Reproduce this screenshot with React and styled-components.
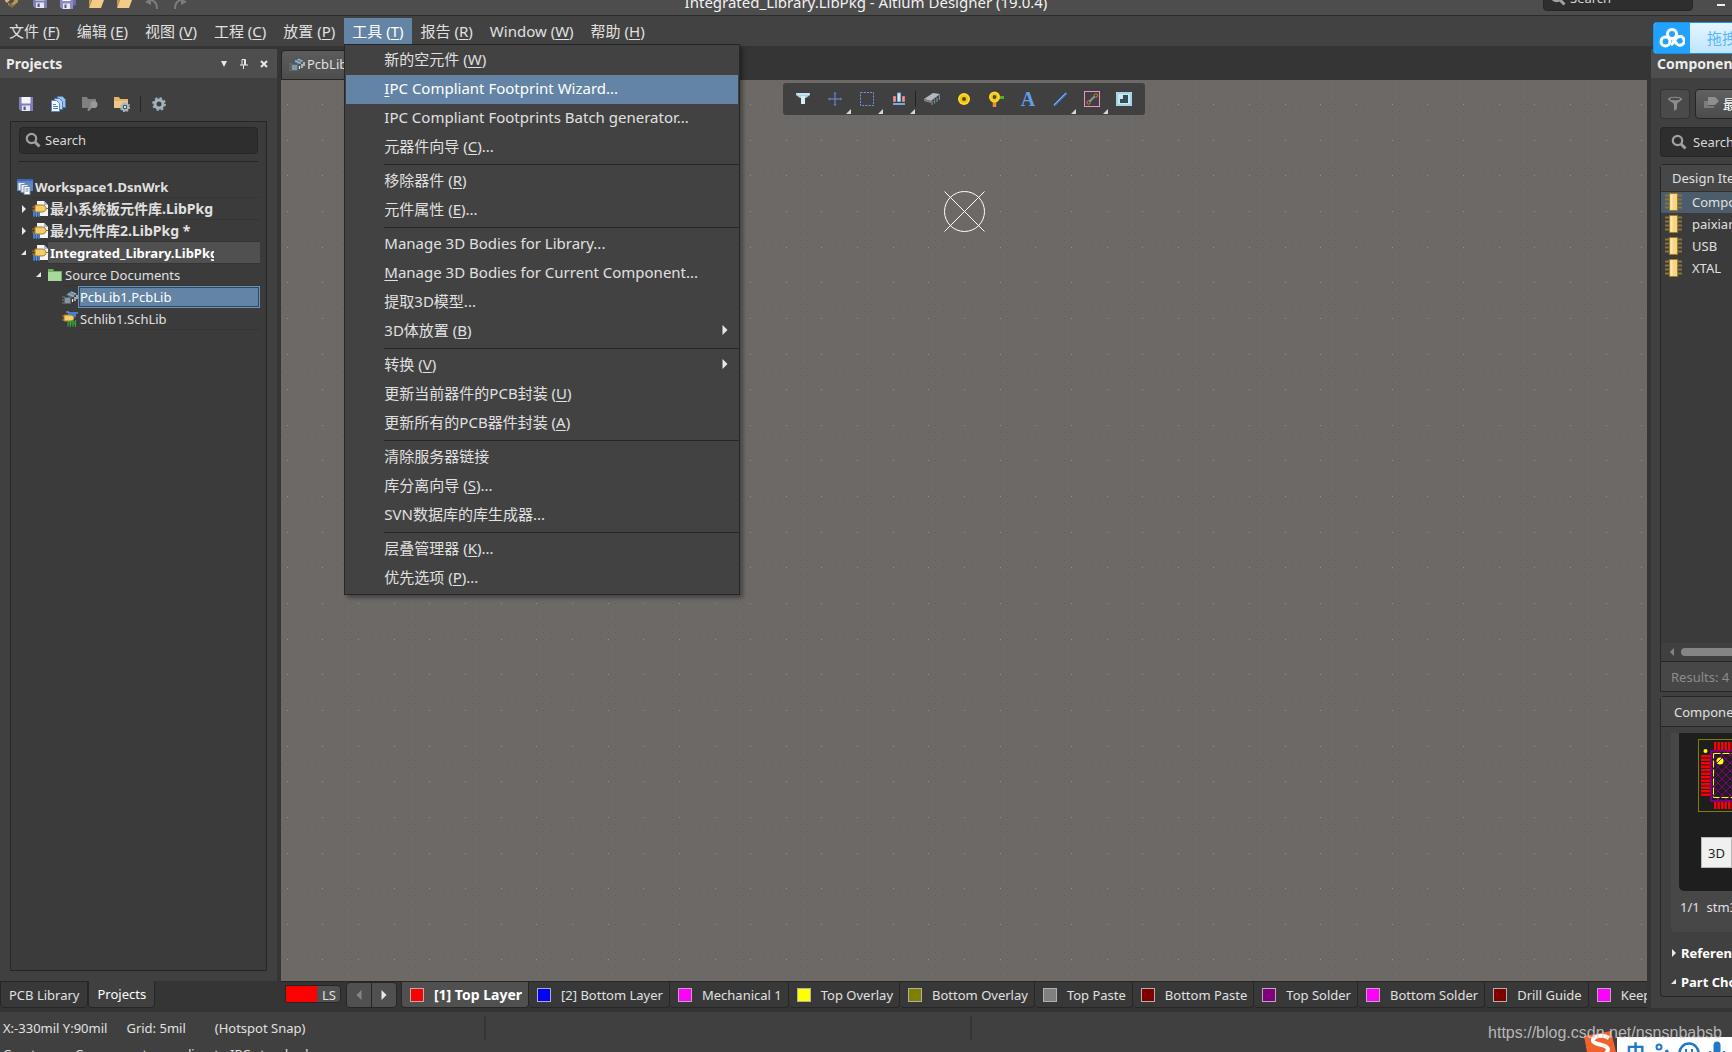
import React from "react";
import styled, { createGlobalStyle, css } from "styled-components";

const GlobalStyle = createGlobalStyle`
  * {
    box-sizing: border-box;
  }

  body {
    margin: 0;
    background: #353535;
    color: #e0e0e0;
    font-family: "Noto Sans", "Noto Sans CJK SC", sans-serif;
    font-size: 13px;
    line-height: 20px;
    overflow: hidden;
  }

  button,
  input {
    font: inherit;
    color: inherit;
    border: 0;
    padding: 0;
    margin: 0;
    background: none;
    text-align: left;
    white-space: nowrap;
  }

  svg {
    display: block;
    flex: none;
  }
`;

// data
const menus = [
  "文件 (&F)",
  "编辑 (&E)",
  "视图 (&V)",
  "工程 (&C)",
  "放置 (&P)",
  "工具 (&T)",
  "报告 (&R)",
  "Window (&W)",
  "帮助 (&H)",
];

const toolsMenu = [
  [
    { label: "新的空元件 (&W)" },
    { label: "&IPC Compliant Footprint Wizard...", active: true },
    { label: "IPC Compliant Footprints Batch generator..." },
    { label: "元器件向导 (&C)..." },
  ],
  [{ label: "移除器件 (&R)" }, { label: "元件属性 (&E)..." }],
  [
    { label: "Manage 3D Bodies for Library..." },
    { label: "&Manage 3D Bodies for Current Component..." },
    { label: "提取3D模型..." },
    { label: "3D体放置 (&B)", sub: true },
  ],
  [
    { label: "转换 (&V)", sub: true },
    { label: "更新当前器件的PCB封装 (&U)" },
    { label: "更新所有的PCB器件封装 (&A)" },
  ],
  [
    { label: "清除服务器链接" },
    { label: "库分离向导 (&S)..." },
    { label: "SVN数据库的库生成器..." },
  ],
  [{ label: "层叠管理器 (&K)..." }, { label: "优先选项 (&P)..." }],
];

const layers = [
  { name: "[1] Top Layer", color: "#ff0000", active: true },
  { name: "[2] Bottom Layer", color: "#0000ff" },
  { name: "Mechanical 1", color: "#ff00ff" },
  { name: "Top Overlay", color: "#ffff00" },
  { name: "Bottom Overlay", color: "#808000" },
  { name: "Top Paste", color: "#808080" },
  { name: "Bottom Paste", color: "#800000" },
  { name: "Top Solder", color: "#800080" },
  { name: "Bottom Solder", color: "#ff00ff" },
  { name: "Drill Guide", color: "#800000" },
  { name: "Keep-Out Layer", color: "#ff00ff" },
];

const designItems = ["Component_1", "paixian", "USB", "XTAL"];

// icons
const Icon = ({ size = 16, children }) => (
  <svg width={size} height={size} viewBox="0 0 16 16" fill="none">
    {children}
  </svg>
);

const SaveIcon = () => (
  <Icon>
    <path d="M1 1h14v14H3l-2-2z" fill="#7f7fb8" />
    <path d="M3.500 1h9v6.500h-9z" fill="#f4f4fb" />
    <path d="M4 9.500h8V15H4z" fill="#e8e8f4" />
    <path d="M5.500 10.500h2.200V14H5.500z" fill="#55558c" />
  </Icon>
);

const SaveAllIcon = () => (
  <Icon>
    <path d="M5 1h11v11l-3 1V3H5z" fill="#6c6ca8" />
    <path d="M0 3h13v13H2l-2-2z" fill="#8b8bc4" />
    <path d="M2.500 3h8v5h-8z" fill="#f4f4fb" />
    <path d="M3 10.500h7V16H3z" fill="#e8e8f4" />
    <path d="M4.500 11.500h2V15h-2z" fill="#55558c" />
  </Icon>
);

const FolderOpenIcon = ({ doc }) => (
  <Icon>
    <path d="M1 2h5l1.500 2H13v3H4L1 14z" fill="#c8974a" />
    {doc && <path d="M6 1h7v9H6z" fill="#f3f6fb" />}
    {doc && <path d="M8 3h4M8 5h4" stroke="#7aa3d6" />}
    <path d="M4 7h12l-3 8H1z" fill="#f2cb86" />
  </Icon>
);

const DocsIcon = () => (
  <Icon>
    <path d="M7.500.5h5l3 3v8h-8z" fill="#9cc0e8" stroke="#4b7ab4" />
    <path d="M4.500 2.500h5l3 3v8h-8z" fill="#bcd6f2" stroke="#4b7ab4" />
    <path d="M1.500 4.500h5l3 3v8h-8z" fill="#f2f8ff" stroke="#5b86ba" />
    <path d="M3 8.500h3M3 10.500h5M3 12.500h5" stroke="#4b8ad0" />
  </Icon>
);

const FolderSearchIcon = () => (
  <Icon>
    <path d="M0 1h5l1 2h8v9H0z" fill="#808080" />
    <path d="M9.500 10.500L6 14.500" stroke="#909090" strokeWidth="2" />
    <circle cx="12" cy="8.500" r="3.500" fill="#999" />
  </Icon>
);

const FolderGearIcon = () => (
  <Icon>
    <path d="M0 1h5l1 2h8v9H0z" fill="#e4b569" />
    <path d="M0 5h14v7H0z" fill="#efc888" />
    <circle cx="11" cy="11" r="3.200" fill="#404040" stroke="#a9b9c2" strokeWidth="2" />
    <circle cx="11" cy="11" r="4.600" stroke="#a9b9c2" strokeWidth="1.200" strokeDasharray="1.800 1.800" />
    <circle cx="11" cy="11" r="1.200" fill="#dfe7eb" />
  </Icon>
);

const GearIcon = () => (
  <Icon>
    <circle cx="8" cy="8" r="4" stroke="#a3b3bd" strokeWidth="3" />
    <circle cx="8" cy="8" r="6" stroke="#a3b3bd" strokeWidth="1.800" strokeDasharray="2.350 2.350" />
  </Icon>
);

const ArrowIcon = ({ flip }) => (
  <Icon>
    <g transform={flip ? "translate(16 0) scale(-1 1)" : undefined}>
      <path d="M4 8c5-2 9 1 9 8" stroke="#7c7c7c" strokeWidth="2" />
      <path d="M1 9l6-4v7z" fill="#7c7c7c" />
    </g>
  </Icon>
);

const AppLogo = () => (
  <svg width="16" height="26" viewBox="0 0 16 26">
    <path d="M9 8l5 3v8l-6 5-4-2v-2l3 1 3-3v-5l-3-2z" fill="#b4975a" />
    <path d="M6 10v7l-3 3-2-2v-7z" fill="#d8b869" />
    <path d="M4 21l4 4 3-3-4-1z" fill="#8a6f38" />
  </svg>
);

const SearchIcon = () => (
  <Icon>
    <circle cx="6.500" cy="6.500" r="4.700" stroke="#a0a0a0" strokeWidth="2.200" />
    <path d="M10 10l4.500 4.500" stroke="#a0a0a0" strokeWidth="3" />
  </Icon>
);

const WorkspaceIcon = () => (
  <Icon>
    <path d="M0 0h16v12H0z" fill="#5d83c9" />
    <path d="M0 0h16v2H0z" fill="#3b66c0" />
    <path d="M1 3.500h7v8H1z" fill="#e8f0fa" stroke="#6d8ab5" />
    <path d="M4 5.500h7v8H4z" fill="#e8f0fa" stroke="#6d8ab5" />
    <path d="M7 7.500h6v8H7z" fill="#fff" stroke="#7d8ea8" />
    <path d="M8.500 10h3M8.500 12h3" stroke="#6b7c94" />
  </Icon>
);

const PackageIcon = () => (
  <Icon>
    <path d="M5 0h7l4 4v11H5z" fill="#f4f6fa" />
    <path d="M12 0v4h4z" fill="#aab8cc" />
    <path d="M1 10h7v5H1z" fill="#2f64b8" />
    <path d="M2 9v7M4.500 9v7M7 9v7" stroke="#5f93e0" />
    <path d="M3 4h7c3 0 4 2 4 3.500S13 11 10 11H3z" fill="#f2cf6c" stroke="#a8791d" />
    <path d="M0 6h3M0 9h3M14 7.500h2" stroke="#a8791d" />
  </Icon>
);

const FolderIcon = () => (
  <Icon>
    <path d="M1 2h5l1 2h8v10H1z" fill="#6fb35f" />
    <path d="M1 5h13v9H1z" fill="#a6d99a" />
  </Icon>
);

const PcbIcon = () => (
  <Icon>
    <path d="M4 6l5-4 6 3-5 4z" fill="#6d8799" stroke="#3e5362" />
    <path d="M6 4.500l6 3M9 3l5 2" stroke="#a5bccb" />
    <path d="M15 6v4M13 8v4M10.500 10v3" stroke="#e8eef2" strokeWidth="1.200" />
    <path d="M2.500 8.500h6v6h-6z" fill="#8896a0" stroke="#5b666e" />
    <path d="M0 8h3M0 11h2M0 14h2" stroke="#6d7c86" />
  </Icon>
);

const SchIcon = () => (
  <Icon>
    <path d="M6 1h8v5H6z" fill="#3f7fe0" />
    <path d="M4 1h3M14 2h2" stroke="#8fbaf6" />
    <path d="M6 10h8v4H6z" fill="#1f7f2d" />
    <path d="M6 9v7M8.500 9v7M11 9v7M13.500 9v7" stroke="#3aa648" />
    <path d="M2 4h6c3 0 4 1.500 4 3s-1 3-4 3H2z" fill="#f2cf6c" stroke="#a8791d" />
    <path d="M0 5h2M0 9h2" stroke="#a8791d" />
  </Icon>
);

const ChipIcon = () => (
  <svg width="17" height="18" viewBox="0 0 17 18">
    <path d="M0 2.500h17M0 6.500h17M0 10.500h17M0 14.500h17" stroke="#8a7440" strokeWidth="2" />
    <path d="M4.500.5h8v17h-8z" fill="#f7d583" stroke="#a07a2e" />
    <path d="M5.500 1.500h2v15h-2z" fill="#fbe7b0" />
  </svg>
);

const FunnelOutline = () => (
  <Icon>
    <path d="M1 3c0-3 14-3 14 0 0 2-5 3-5 6v4l-3 2V9c0-3-6-4-6-6z" fill="#8c8c8c" />
    <ellipse cx="8" cy="3" rx="5" ry="1.200" fill="#4a4a4a" />
  </Icon>
);

const TagsIcon = () => (
  <Icon>
    <path d="M5 1h7l4 4-4 4H5z" fill="#8f8f8f" />
    <path d="M1 5h4v5h6v2H1z" fill="#7c7c7c" />
  </Icon>
);

const FilterTool = () => (
  <Icon>
    <path d="M1 2h14v2l-4 3H5L1 4z" fill="#a8d2df" />
    <path d="M6 5h4v8H6z" fill="#d8eef4" />
    <path d="M2 3h12" stroke="#e6f6fa" />
  </Icon>
);

const CrossTool = () => (
  <Icon>
    <path d="M8 1.500v13M1.500 8h13" stroke="#6f8fe0" />
    <path d="M8 1l1.500 2h-3zM8 15l1.500-2h-3zM1 8l2-1.500v3zM15 8l-2-1.500v3z" fill="#5f80d0" />
  </Icon>
);

const SelectTool = () => (
  <Icon>
    <rect x="1.500" y="1.500" width="13" height="13" stroke="#7394ea" strokeDasharray="2 1.200" />
  </Icon>
);

const AlignTool = () => (
  <Icon>
    <path d="M2.500 5.500h2v5h-2zM11.500 5.500h2v5h-2z" fill="#ef9a98" stroke="#e07f7d" />
    <path d="M6.500 2h3v8.500h-3z" fill="#c9e6f4" stroke="#7fb4d0" />
    <path d="M2 13h12" stroke="#7ba4ea" strokeWidth="2" />
  </Icon>
);

const ComponentTool = () => (
  <Icon>
    <path d="M0 8l9-6 7 1-9 7z" fill="#b5b8ba" />
    <path d="M0 8l7 2v2l-7-2z" fill="#7f8384" />
    <path d="M8 10v4M10.500 8.500v4M13 6.500v4.500M15.500 4v5" stroke="#6f9098" strokeWidth="1.200" />
  </Icon>
);

const PadTool = () => (
  <Icon>
    <circle cx="8" cy="8" r="6" fill="#f5c60c" />
    <circle cx="8" cy="8" r="5" stroke="#ffe15a" />
    <circle cx="8" cy="8" r="2" fill="#544a14" />
  </Icon>
);

const ViaTool = () => (
  <Icon>
    <path d="M10 6.500h6" stroke="#4fae2b" strokeWidth="3" />
    <path d="M6.500 9v7" stroke="#e8912b" strokeWidth="3.500" />
    <circle cx="6.500" cy="6" r="5.500" fill="#f5c60c" />
    <circle cx="6.500" cy="6" r="4.500" stroke="#ffe15a" />
    <circle cx="6.500" cy="6" r="1.900" fill="#544a14" />
  </Icon>
);

const LineTool = () => (
  <Icon>
    <path d="M2 14.500L14.500 2" stroke="#3f7fd0" strokeWidth="2.400" />
    <path d="M2 14L14 2" stroke="#7db4f2" />
  </Icon>
);

const TrackTool = () => (
  <Icon>
    <rect x=".5" y=".5" width="15" height="15" stroke="#f08fd2" />
    <path d="M5.500 10.500l5-5" stroke="#7a93b8" strokeWidth="2" />
    <circle cx="4.500" cy="11.500" r="1.700" stroke="#c88a1e" />
    <circle cx="11.800" cy="4.500" r="1.700" stroke="#c88a1e" />
  </Icon>
);

const RegionTool = () => (
  <Icon>
    <path d="M0 1h16v14H0z" fill="#c6e8f4" />
    <path d="M1 2h14v12H1z" stroke="#8fbfd2" />
    <path d="M7 4h5v8H4V8h3z" fill="#3a4a52" />
  </Icon>
);

const DropIcon = ({ type, size = 8 }) => (
  <svg width={size} height={size} viewBox="0 0 8 8" fill="#e8e8e8">
    {type === "down" && <path d="M1 1h6L4 7z" />}
    {type === "right" && <path d="M2 0l4 4-4 4z" />}
    {type === "left" && <path d="M6 0L2 4l4 4z" fill="#858585" />}
    {type === "open" && <path d="M6 1v5H1z" />}
  </svg>
);

const PinIcon = () => (
  <svg width="8" height="10" viewBox="0 0 8 10" fill="none" stroke="#e8e8e8">
    <path d="M2 6V.5h3.500V6M0 6h8M3.500 6v4" />
    <path d="M5 1v5" strokeWidth="2" />
  </svg>
);

const CloseIcon = () => (
  <svg width="8" height="8" viewBox="0 0 8 8" stroke="#e8e8e8" strokeWidth="2">
    <path d="M1 1l6 6M7 1L1 7" />
  </svg>
);

const CloudIcon = () => (
  <svg width="26" height="20" viewBox="0 0 26 20" fill="none" stroke="#fff" strokeWidth="3">
    <circle cx="13" cy="6" r="4.500" />
    <circle cx="6.500" cy="13.500" r="4.500" />
    <path d="M13 10l5 6a4.300 4.300 0 1 0 1-7c-3 1-4 6-7 8" />
  </svg>
);

const ImeLogo = () => (
  <svg width="36" height="22" viewBox="0 0 36 22">
    <path d="M3 6l27-5 5 21H6z" fill="#f2622c" />
    <path d="M28 8c-6-4-17-2-16 3 1 4 14 3 15 8 0 2-1 3-2 4" fill="none" stroke="#fff" strokeWidth="4" />
  </svg>
);

const ImeIcons = () => (
  <svg width="76" height="14" viewBox="0 0 76 14" fill="none" stroke="#1f78c8" strokeWidth="3">
    <circle cx="6" cy="6" r="2.500" strokeWidth="2" />
    <path d="M13 9l2 3" />
    <circle cx="36" cy="12" r="9.500" strokeWidth="2.500" />
    <path d="M33 8v4M39 8v4" strokeWidth="2" />
    <path d="M64 4v10" strokeWidth="7" strokeLinecap="round" />
    <path d="M57 10c0 6 14 6 14 0" strokeWidth="2" />
  </svg>
);

// The footprint of a quad flat package: pads around a hatched body.
const Footprint = () => {
  const pads = [0, 1, 2, 3, 4, 5, 6, 7, 8, 9, 10, 11];
  return (
    <svg width="74" height="74" viewBox="0 0 74 74" fill="none">
      <defs>
        <pattern id="hatch" width="8" height="8" patternUnits="userSpaceOnUse">
          <path d="M0 0l8 8M8 0L0 8" stroke="#800080" />
        </pattern>
      </defs>
      <rect x=".5" y=".5" width="73" height="72" stroke="#808000" />
      {pads.map((i) => (
        <g key={i} fill="#f00">
          <rect x="3" y={16 + i * 3.5} width="10" height="2.400" />
          <rect x={16 + i * 3.5} y="3" width="2.400" height="8" />
          <rect x={16 + i * 3.5} y="62" width="2.400" height="8" />
        </g>
      ))}
      <rect x="13" y="12" width="50" height="50" fill="url(#hatch)" stroke="#800080" strokeWidth="2" />
      <rect x="15.500" y="14.500" width="44" height="44" stroke="#ff0" strokeDasharray="7 2" />
      <circle cx="22" cy="22" r="3.500" fill="#ff0" />
      <path d="M19 24l5-5" stroke="#800080" />
      <circle cx="7.500" cy="12" r="2" fill="#ff0" />
    </svg>
  );
};

// Dots are snapped to whole pixels, so each one stays crisp.
const PITCH = 35.64;

const dotPath = (step, cols, rows) => {
  let d = "";
  for (let r = -rows; r <= rows; r++) {
    for (let c = -cols; c <= cols; c++) {
      d += `M${Math.round(c * step)} ${Math.round(r * step)}h1v1h-1z`;
    }
  }
  return d;
};

const minorDots = dotPath(PITCH / 5, 120, 125);
const majorDots = dotPath(PITCH, 24, 25);

const Grid = () => (
  <GridSvg width="100%" height="100%">
    <svg x="50%" y="131" overflow="visible">
      <path d={minorDots} fill="#636060" shapeRendering="crispEdges" />
      <path d={majorDots} fill="#949291" shapeRendering="crispEdges" />
      <circle cx=".5" cy=".5" r="20" fill="none" stroke="#fff" />
      <path d="M-19.500-19.500l40 40M20.500-19.500l-40 40" stroke="#fff" />
    </svg>
  </GridSvg>
);

const tools = [
  { name: "Filter", icon: <FilterTool /> },
  { name: "Move", icon: <CrossTool />, more: true },
  { name: "Select", icon: <SelectTool />, more: true },
  { name: "Align", icon: <AlignTool />, more: true },
  { name: "Component", icon: <ComponentTool />, divider: true },
  { name: "Pad", icon: <PadTool /> },
  { name: "Via", icon: <ViaTool /> },
  { name: "String", letter: "A" },
  { name: "Line", icon: <LineTool />, more: true },
  { name: "Track", icon: <TrackTool />, more: true },
  { name: "Region", icon: <RegionTool /> },
];

const tree = [
  { level: 1, name: "最小系统板元件库.LibPkg *", icon: <PackageIcon />, arrow: "right", bold: true, large: true },
  { level: 1, name: "最小元件库2.LibPkg *", icon: <PackageIcon />, arrow: "right", bold: true, large: true },
  { level: 1, name: "Integrated_Library.LibPkg", icon: <PackageIcon />, arrow: "open", bold: true, current: true },
  { level: 2, name: "Source Documents", icon: <FolderIcon />, arrow: "open" },
  { level: 3, name: "PcbLib1.PcbLib", icon: <PcbIcon />, selected: true },
  { level: 3, name: "Schlib1.SchLib", icon: <SchIcon /> },
];

// "&" marks the letter that is underlined
const Label = ({ text }) => {
  const at = text.indexOf("&");
  if (at < 0) return <span>{text}</span>;
  return (
    <span>
      {text.slice(0, at)}
      <u>{text[at + 1]}</u>
      {text.slice(at + 2)}
    </span>
  );
};

export default function App() {
  return (
    <Window>
      <GlobalStyle />
      <TitleBar>
        <QuickAccess>
          <AppLogo />
          <SaveIcon />
          <SaveAllIcon />
          <FolderOpenIcon />
          <FolderOpenIcon doc />
          <ArrowIcon />
          <ArrowIcon flip />
        </QuickAccess>
        <Title>Integrated_Library.LibPkg - Altium Designer (19.0.4)</Title>
        <TitleRight>
          <TitleSearch>
            <SearchIcon />
            <input type="search" placeholder="Search" aria-label="Search everywhere" />
          </TitleSearch>
          <Minimize aria-label="Minimize" />
        </TitleRight>
      </TitleBar>

      <MenuBar>
        {menus.map((menu) => {
          const open = menu.includes("&T");
          return (
            <MenuSlot key={menu}>
              <MenuButton $open={open}>
                <Label text={menu} />
              </MenuButton>
              {open && (
                <Popup>
                  {toolsMenu.map((group, i) => (
                    <MenuGroup key={i}>
                      {group.map((item) => (
                        <MenuItem key={item.label} $active={item.active}>
                          <Label text={item.label} />
                          {item.sub && <DropIcon type="right" size={10} />}
                        </MenuItem>
                      ))}
                    </MenuGroup>
                  ))}
                </Popup>
              )}
            </MenuSlot>
          );
        })}
      </MenuBar>

      <Workspace>
        <ProjectsPanel>
          <PanelHeader>
            <h2>Projects</h2>
            <button aria-label="Menu">
              <DropIcon type="down" />
            </button>
            <button aria-label="Pin">
              <PinIcon />
            </button>
            <button aria-label="Close">
              <CloseIcon />
            </button>
          </PanelHeader>
          <PanelBody>
            <PanelTools>
              <button aria-label="Save">
                <SaveIcon />
              </button>
              <button aria-label="Compile">
                <DocsIcon />
              </button>
              <button aria-label="Explore">
                <FolderSearchIcon />
              </button>
              <button aria-label="Project options">
                <FolderGearIcon />
              </button>
              <ToolRule />
              <button aria-label="Settings">
                <GearIcon />
              </button>
            </PanelTools>
            <TreeBox>
              <SearchField>
                <SearchIcon />
                <input type="search" placeholder="Search" aria-label="Search projects" />
              </SearchField>
              <Rule />
              <TreeRow $level={0}>
                <WorkspaceIcon />
                <TreeCell $bold>
                  <span>Workspace1.DsnWrk</span>
                </TreeCell>
              </TreeRow>
              {tree.map((row) => (
                <TreeRow key={row.name} $level={row.level}>
                  <TreeArrow>{row.arrow && <DropIcon type={row.arrow} />}</TreeArrow>
                  {row.icon}
                  <TreeCell
                    $bold={row.bold}
                    $large={row.large}
                    $current={row.current}
                    $selected={row.selected}
                  >
                    <span>{row.name}</span>
                  </TreeCell>
                </TreeRow>
              ))}
            </TreeBox>
          </PanelBody>
          <PanelTabs>
            <PanelTab>PCB Library</PanelTab>
            <PanelTab $active>Projects</PanelTab>
          </PanelTabs>
        </ProjectsPanel>

        <Editor>
          <EditorTabs>
            <EditorTab>
              <PcbIcon />
              PcbLib1.PcbLib
            </EditorTab>
          </EditorTabs>
          <Canvas>
            <Grid />
            <ActiveBar>
              {tools.map((tool) => (
                <React.Fragment key={tool.name}>
                  {tool.divider && <BarRule />}
                  <BarButton aria-label={tool.name} $more={tool.more}>
                    {tool.icon || <Letter>{tool.letter}</Letter>}
                  </BarButton>
                </React.Fragment>
              ))}
            </ActiveBar>
          </Canvas>
          <LayerBar>
            <LayerSet>
              <i />
              <span>LS</span>
            </LayerSet>
            <LayerNav>
              <button aria-label="Previous layer">
                <DropIcon type="left" size={10} />
              </button>
              <button aria-label="Next layer">
                <DropIcon type="right" size={10} />
              </button>
            </LayerNav>
            {layers.map((layer) => (
              <LayerTab key={layer.name} $active={layer.active}>
                <Swatch $color={layer.color} />
                {layer.name}
              </LayerTab>
            ))}
          </LayerBar>
        </Editor>

        <ComponentsPanel>
          <PanelHeader>
            <h2>Components</h2>
          </PanelHeader>
          <ComponentsBody>
            <LibraryRow>
              <FilterButton aria-label="Filter">
                <FunnelOutline />
              </FilterButton>
              <LibraryButton>
                <TagsIcon />
                最小元件库2.LibPkg
              </LibraryButton>
            </LibraryRow>
            <ComponentSearch>
              <SearchIcon />
              <input type="text" placeholder="Search" aria-label="Search components" />
            </ComponentSearch>
            <ListBox>
              <ItemTable>
                <thead>
                  <tr>
                    <th scope="col">Design Item ID</th>
                  </tr>
                </thead>
                <tbody>
                  {designItems.map((item, i) => (
                    <ItemRow key={item} $selected={i === 0}>
                      <td>
                        <div>
                          <ChipIcon />
                          {item}
                        </div>
                      </td>
                    </ItemRow>
                  ))}
                </tbody>
              </ItemTable>
              <ScrollRow>
                <DropIcon type="left" />
                <Thumb />
              </ScrollRow>
              <Results>Results: 4</Results>
            </ListBox>
            <Details>
              <DetailsHeader>Component_1</DetailsHeader>
              <Preview>
                <PreviewBox>
                  <Footprint />
                  <ViewButton>3D</ViewButton>
                </PreviewBox>
                <PreviewName>1/1&nbsp; stm32</PreviewName>
              </Preview>
              <Section>
                <DropIcon type="right" />
                References
              </Section>
              <Section>
                <DropIcon type="open" />
                Part Choices
              </Section>
            </Details>
          </ComponentsBody>
        </ComponentsPanel>
      </Workspace>

      <StatusBar>
        <StatusRow>
          <StatusCell>
            <span>X:-330mil Y:90mil</span>
            <span>Grid: 5mil</span>
            <Snap>(Hotspot Snap)</Snap>
          </StatusCell>
          <StatusCell />
        </StatusRow>
        <StatusHint>Create new Component according to IPC standard</StatusHint>
      </StatusBar>

      <UploadBadge>
        <UploadLogo>
          <CloudIcon />
        </UploadLogo>
        拖拽上传
      </UploadBadge>
      <Ime>
        <ImeLogo />
        <ImeBar>
          <span>中</span>
          <ImeIcons />
        </ImeBar>
      </Ime>
      <Watermark>https://blog.csdn.net/nsnsnbabsb</Watermark>
    </Window>
  );
}

const Window = styled.div`
  position: relative;
  display: flex;
  flex-direction: column;
  height: 100vh;
  overflow: hidden;
`;

// The bar is cut off by the top of the screen, so its content hangs from the bottom.
const TitleBar = styled.header`
  display: grid;
  grid-template-columns: 1fr auto 1fr;
  grid-template-rows: 15px;
  align-items: end;
  height: 16px;
  flex: none;
  background: #4d4d4d;
  border-bottom: 1px solid #2c2c2c;
  overflow: hidden;
`;

const QuickAccess = styled.div`
  display: flex;
  align-items: flex-end;
  gap: 12px;
  padding: 0 0 6px 4px;
  height: 15px;
`;

const Title = styled.h1`
  margin: 0;
  padding-bottom: 2px;
  font-size: 15px;
  font-weight: 400;
  line-height: 22px;
  color: #f2f2f2;
  white-space: nowrap;
`;

const TitleRight = styled.div`
  display: flex;
  justify-content: flex-end;
  align-items: flex-end;
  gap: 24px;
  height: 15px;
  padding-right: 7px;
`;

const field = css`
  display: flex;
  align-items: center;
  gap: 4px;
  background: #2e2e2e;
  border: 1px solid #262626;
  border-radius: 4px;

  input {
    min-width: 0;
    flex: 1;
    outline: 0;
  }

  input::placeholder {
    color: #d8d8d8;
    opacity: 1;
  }
`;

const TitleSearch = styled.label`
  ${field}
  width: 150px;
  height: 26px;
  flex: none;
  padding: 0 6px;
  margin-bottom: 4px;
`;

const Minimize = styled.button`
  width: 8px;
  height: 2px;
  margin-bottom: 9px;
  background: #f0f0f0;
`;

const MenuBar = styled.nav`
  display: flex;
  flex: none;
  gap: 1px;
  height: 30px;
  padding: 2px 0 0 1px;
  background: #424242;
  font-size: 15px;
`;

const MenuSlot = styled.div`
  position: relative;
`;

const MenuButton = styled.button`
  height: 26px;
  padding: 0 8px;
  line-height: 24px;
  background: ${(props) => (props.$open ? "#6384a4" : "none")};
  color: ${(props) => (props.$open ? "#ffffff" : "#e0e0e0")};

  u {
    text-underline-offset: 2px;
  }
`;

const Popup = styled.div`
  position: absolute;
  z-index: 10;
  top: 26px;
  left: 0;
  width: 396px;
  padding: 1px 0 1px 1px;
  background: #424242;
  border: 1px solid #262626;
  box-shadow: 3px 3px 4px rgba(0, 0, 0, 0.35);
`;

const MenuGroup = styled.div`
  & + &::before {
    content: "";
    display: block;
    height: 1px;
    margin: 2px 0 2px 38px;
    background: #262626;
  }
`;

const MenuItem = styled.button`
  display: flex;
  align-items: center;
  justify-content: space-between;
  width: calc(100% - 1px);
  height: 29px;
  padding: 0 8px 3px 38px;
  background: ${(props) => (props.$active ? "#6384a4" : "none")};
  color: ${(props) => (props.$active ? "#ffffff" : "#e0e0e0")};

  u {
    text-underline-offset: 2px;
  }
`;

const Workspace = styled.main`
  display: grid;
  grid-template-columns: 277px minmax(0, 1fr) 81px;
  grid-template-rows: minmax(0, 1fr);
  gap: 4px;
  flex: 1;
  min-height: 0;
  padding: 3px 0 4px;
`;

const ProjectsPanel = styled.aside`
  display: flex;
  flex-direction: column;
`;

const PanelHeader = styled.div`
  display: flex;
  align-items: center;
  gap: 12px;
  height: 29px;
  flex: none;
  padding: 0 9px 0 6px;
  background: #4e4e4e;

  h2 {
    flex: 1;
    margin: 0;
    font-size: 14px;
    font-weight: 700;
    color: #ececec;
  }
`;

const PanelBody = styled.div`
  display: flex;
  flex-direction: column;
  flex: 1;
  min-height: 0;
  padding: 0 10px 10px;
  background: #404040;
`;

const PanelTools = styled.div`
  display: flex;
  align-items: center;
  gap: 16px;
  height: 43px;
  padding: 9px 0 0 8px;
`;

const ToolRule = styled.span`
  width: 1px;
  height: 16px;
  margin: 0 -6px;
  background: #262626;
`;

const TreeBox = styled.div`
  flex: 1;
  min-height: 0;
  padding: 5px 6px;
  background: #3b3b3b;
  border: 1px solid #262626;
`;

const SearchField = styled.label`
  ${field}
  height: 27px;
  margin: 0 2px;
  padding: 0 5px 2px;
`;

const Rule = styled.hr`
  height: 1px;
  margin: 7px 2px 14px;
  border: 0;
  background: #262626;
`;

const TreeRow = styled.div`
  display: flex;
  align-items: center;
  height: 22px;
  padding-left: ${(props) => Math.max(0, props.$level - 1) * 15}px;
`;

const TreeArrow = styled.span`
  display: flex;
  justify-content: center;
  width: 15px;
  flex: none;
  padding-right: 2px;
`;

const TreeCell = styled.div`
  flex: 1;
  height: 22px;
  min-width: 0;
  padding: 0 46px 0 2px;
  border-bottom: 1px solid #353535;
  line-height: 22px;
  font-size: ${(props) => (props.$large ? 14 : 13)}px;
  font-weight: ${(props) => (props.$bold ? 700 : 400)};
  white-space: nowrap;

  span {
    display: block;
    overflow: hidden;
  }

  ${(props) =>
    props.$current &&
    css`
      background: #505050;
      color: #ffffff;
    `}

  ${(props) =>
    props.$selected &&
    css`
      padding-left: 1px;
      line-height: 20px;
      background: #6384a4;
      border: 1px solid #6a93bd;
      box-shadow: inset 0 0 0 1px #33475a;
      color: #ffffff;
    `}
`;

const PanelTabs = styled.div`
  display: flex;
  height: 27px;
  flex: none;
`;

const PanelTab = styled.button`
  padding: 0 8px;
  line-height: 24px;
  border: 1px solid #262626;
  border-top-width: ${(props) => (props.$active ? 0 : "1px")};
  border-radius: 0 0 4px 4px;
  background: ${(props) => (props.$active ? "#404040" : "#383838")};
  color: ${(props) => (props.$active ? "#ffffff" : "#e0e0e0")};
`;

const Editor = styled.section`
  display: flex;
  flex-direction: column;
  min-width: 0;
`;

const EditorTabs = styled.div`
  display: flex;
  height: 31px;
  flex: none;
  padding-top: 1px;
`;

const EditorTab = styled.button`
  display: flex;
  align-items: center;
  gap: 2px;
  padding: 0 16px 2px 7px;
  background: linear-gradient(#5c5c5c, #4e4e4e);
  border: 1px solid #262626;
  border-radius: 4px 4px 0 0;
`;

const Canvas = styled.div`
  position: relative;
  flex: 1;
  min-height: 0;
  overflow: hidden;
  background: #6d6967;
`;

const GridSvg = styled.svg`
  position: absolute;
  inset: 0;
`;

const ActiveBar = styled.div`
  position: relative;
  display: flex;
  align-items: center;
  width: fit-content;
  height: 32px;
  margin: 3px auto 0;
  padding: 0 5px 0 4px;
  background: #404040;
  border-radius: 3px;
`;

const BarRule = styled.span`
  width: 1px;
  height: 16px;
  background: #222222;
`;

const BarButton = styled.button`
  position: relative;
  display: flex;
  align-items: center;
  justify-content: center;
  width: 32px;
  height: 32px;

  ${(props) =>
    props.$more &&
    css`
      &::after {
        content: "";
        position: absolute;
        right: 0;
        bottom: 1px;
        border-left: 5px solid transparent;
        border-bottom: 5px solid #d8d8d8;
      }
    `}
`;

const Letter = styled.span`
  font-family: "Liberation Serif", serif;
  font-size: 20px;
  font-weight: 700;
  color: #5f9fe8;
`;

const LayerBar = styled.div`
  display: flex;
  height: 27px;
  flex: none;
  overflow: hidden;
  border-top: 1px solid #262626;
`;

const LayerSet = styled.button`
  display: flex;
  height: 18px;
  flex: none;
  margin: 3px 5px 0 4px;
  line-height: 18px;
  border: 1px solid #262626;
  border-radius: 0 4px 4px 0;
  background: #505050;

  i {
    width: 31px;
    background: #ff0000;
  }

  span {
    padding: 0 4px 0 5px;
  }
`;

const LayerNav = styled.div`
  display: flex;
  flex: none;
  width: 51px;
  margin-right: 4px;
  border: 1px solid #262626;
  border-radius: 4px;
  background: #505050;

  button {
    display: flex;
    flex: 1;
    align-items: center;
    justify-content: center;
  }

  button + button {
    border-left: 1px solid #262626;
  }
`;

const LayerTab = styled.button`
  display: flex;
  align-items: center;
  gap: 10px;
  flex: none;
  padding: 0 6px 0 8px;
  border: 1px solid #262626;
  border-top: 0;
  border-left-width: ${(props) => (props.$active ? "1px" : 0)};
  border-radius: 0 0 4px 4px;
  background: ${(props) => (props.$active ? "#505050" : "#383838")};
  color: ${(props) => (props.$active ? "#ffffff" : "#e0e0e0")};
  font-size: ${(props) => (props.$active ? 14 : 13)}px;
  font-weight: ${(props) => (props.$active ? 700 : 400)};
`;

const Swatch = styled.i`
  width: 14px;
  height: 14px;
  border: 1px solid #b0b0b0;
  background: ${(props) => props.$color};
`;

const ComponentsPanel = styled.aside`
  display: flex;
  flex-direction: column;
  overflow: hidden;
  white-space: nowrap;
`;

const ComponentsBody = styled.div`
  display: flex;
  flex-direction: column;
  flex: 1;
  min-height: 0;
  padding: 11px 0 11px 9px;
  background: #404040;
`;

const LibraryRow = styled.div`
  display: flex;
  gap: 5px;
  height: 30px;
`;

const FilterButton = styled.button`
  display: flex;
  align-items: center;
  justify-content: center;
  width: 30px;
  flex: none;
  border: 1px solid #333333;
  border-radius: 4px;
  background: #4a4a4a;
`;

const LibraryButton = styled.button`
  display: flex;
  align-items: center;
  gap: 4px;
  flex: none;
  padding: 0 7px;
  border: 1px solid #262626;
  border-radius: 4px;
  background: linear-gradient(#616161, #4b4b4b);
  color: #ffffff;
`;

const ComponentSearch = styled.label`
  ${field}
  gap: 6px;
  height: 30px;
  flex: none;
  margin: 8px 0 7px;
  padding: 0 0 0 10px;
  border-right: 0;
  border-radius: 4px 0 0 4px;
`;

const ListBox = styled.div`
  display: flex;
  flex-direction: column;
  flex: 1;
  min-height: 0;
  border: 1px solid #262626;
  border-right: 0;
  border-radius: 4px 0 0 0;
  background: #3b3b3b;
`;

const ItemTable = styled.table`
  width: 100%;
  border-collapse: collapse;

  th {
    height: 26px;
    padding: 0 0 0 11px;
    font-weight: 400;
    text-align: left;
    background: #474747;
    border-bottom: 1px solid #303030;
  }
`;

const ItemRow = styled.tr`
  height: 22px;
  background: ${(props) => (props.$selected ? "#4b5c6b" : "none")};

  td {
    padding: 0 0 0 4px;
  }

  div {
    display: flex;
    align-items: center;
    gap: 10px;
  }
`;

const ScrollRow = styled.div`
  display: flex;
  align-items: center;
  gap: 5px;
  height: 18px;
  flex: none;
  margin-top: auto;
  padding-left: 7px;
  background: #404040;
`;

const Thumb = styled.span`
  flex: 1;
  height: 8px;
  border-radius: 4px 0 0 4px;
  background: #858585;
`;

const Results = styled.div`
  height: 30px;
  flex: none;
  padding-left: 10px;
  line-height: 30px;
  border-top: 1px solid #262626;
  background: #474747;
  color: #8c8c8c;
`;

const Details = styled.div`
  display: flex;
  flex-direction: column;
  flex: none;
  margin-top: 4px;
  border: 1px solid #262626;
  border-right: 0;
  border-radius: 4px 0 0 4px;
`;

const DetailsHeader = styled.div`
  height: 30px;
  padding-left: 13px;
  line-height: 30px;
  background: #474747;
  border-bottom: 1px solid #262626;
`;

const Preview = styled.div`
  margin: 6px 0 6px 10px;
  padding-left: 8px;
  border-radius: 0 0 0 4px;
  background: #474747;
`;

const PreviewBox = styled.div`
  display: flex;
  flex-direction: column;
  align-items: flex-start;
  gap: 24px;
  height: 158px;
  padding: 6px 0 0 19px;
  overflow: hidden;
  border-radius: 0 0 0 5px;
  background: #1e1e1e;
`;

const ViewButton = styled.button`
  width: 31px;
  height: 31px;
  flex: none;
  margin-left: 3px;
  text-align: center;
  border: 1px solid #b8b8b8;
  background: #f0f0f0;
  color: #1e1e1e;
`;

const PreviewName = styled.p`
  margin: 0;
  height: 41px;
  padding: 6px 0 0 1px;
`;

const Section = styled.button`
  display: flex;
  align-items: center;
  gap: 3px;
  height: 29px;
  padding-left: 9px;
  font-weight: 700;
  color: #ffffff;
`;

const StatusBar = styled.footer`
  height: 40px;
  flex: none;
  overflow: hidden;
  padding-top: 4px;
  background: #404040;
`;

const StatusRow = styled.div`
  display: flex;
  height: 24px;
`;

const StatusCell = styled.div`
  display: flex;
  gap: 19px;
  width: 486px;
  padding-left: 3px;
  line-height: 24px;
  border-right: 2px solid #353535;
`;

const Snap = styled.span`
  margin-left: 10px;
`;

const StatusHint = styled.div`
  padding: 4px 0 0 3px;
`;

const UploadBadge = styled.div`
  position: absolute;
  top: 22px;
  right: 0;
  display: flex;
  align-items: center;
  gap: 17px;
  width: 79px;
  height: 32px;
  overflow: hidden;
  white-space: nowrap;
  border: 1px solid #1e90e8;
  border-right: 0;
  border-radius: 4px 0 0 4px;
  background: linear-gradient(#e4f5ff, #bfe6ff);
  color: #5cb6f6;
  font-size: 15px;
`;

const UploadLogo = styled.span`
  display: flex;
  align-items: center;
  justify-content: center;
  width: 36px;
  height: 32px;
  flex: none;
  background: #22a2ff;
`;

const Ime = styled.div`
  position: absolute;
  right: 0;
  bottom: 0;
  display: flex;
  align-items: flex-end;
  height: 18px;
`;

const ImeBar = styled.div`
  display: flex;
  align-items: flex-start;
  width: 115px;
  height: 15px;
  overflow: hidden;
  background: #ffffff;
  color: #1f78c8;
  font-size: 19px;
  font-weight: 700;
  line-height: 30px;

  span {
    padding: 0 8px 0 9px;
  }

  svg {
    margin-top: 4px;
  }
`;

const Watermark = styled.a.attrs({ href: "https://blog.csdn.net/nsnsnbabsb" })`
  position: absolute;
  right: 10px;
  bottom: 9px;
  font-family: "Liberation Sans", sans-serif;
  font-size: 16px;
  line-height: 20px;
  color: rgba(215, 215, 215, 0.8);
  text-decoration: none;
`;
